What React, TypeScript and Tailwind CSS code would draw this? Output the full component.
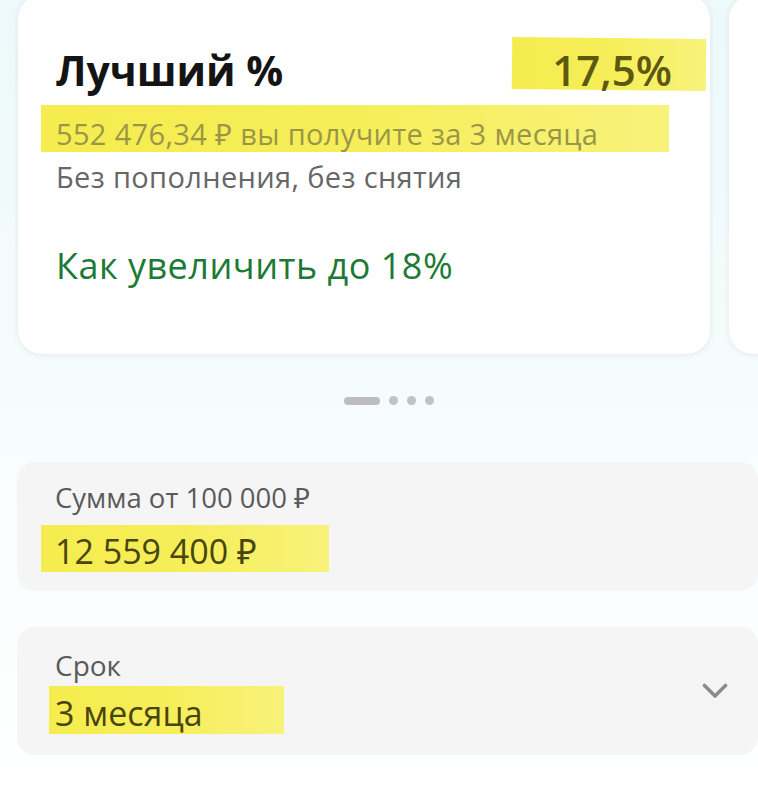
import React from "react";

const font = { fontFamily: '"Open Sans", "Noto Sans", sans-serif' };

function Highlight({ className }: { className: string }) {
  return (
    <div
      className={
        "absolute bg-gradient-to-r from-[#f5ec4f] via-[#f6ee58] to-[#f8f27a] " +
        className
      }
    />
  );
}

export default function App() {
  return (
    <div
      className="w-[758px] h-[790px] overflow-hidden bg-gradient-to-b from-[#edf9fa] via-[#f6fcfc] to-white"
      style={font}
    >
      {/* carousel */}
      <div className="flex gap-[19px] pl-[18px] -mt-[5px]">
        <div className="relative shrink-0 w-[692px] h-[359px] rounded-[24px] bg-white shadow-[0_1px_6px_rgba(0,0,0,0.08)] pl-[38px] pr-[38px] pt-[50px]">
          <Highlight className="left-[494px] top-[43px] w-[194px] h-[52px] rotate-[0.6deg]" />
          <Highlight className="left-[23px] top-[110px] w-[628px] h-[47px]" />
          <div className="relative flex items-baseline justify-between h-[50px] leading-[50px]">
            <span className="text-[41px] font-bold text-[#141414]">
              Лучший %
            </span>
            <span className="text-[42px] font-semibold text-[#5c590f]">17,5%</span>
          </div>
          <div className="relative mt-[22px] text-[29px] leading-[34px] tracking-[0.35px] text-[#9a9648]">
            552 476,34 ₽ вы получите за 3 месяца
          </div>
          <div className="relative mt-[9px] text-[29px] leading-[34px] tracking-[0.35px] text-[#676767]">
            Без пополнения, без снятия
          </div>
          <div className="relative mt-[50px] text-[36px] leading-[44px] tracking-[0.5px] font-medium text-[#1d7a34]">
            Как увеличить до 18%
          </div>
        </div>
        <div className="shrink-0 w-[692px] h-[359px] rounded-[24px] bg-white shadow-[0_1px_6px_rgba(0,0,0,0.08)]" />
      </div>

      {/* dots */}
      <div className="flex items-center justify-center gap-[9px] mt-[42px] pl-[20px]">
        <div className="w-[36px] h-[8px] rounded-full bg-[#bdbdbd]" />
        <div className="w-[9px] h-[9px] rounded-full bg-[#c2c2c2]" />
        <div className="w-[9px] h-[9px] rounded-full bg-[#c2c2c2]" />
        <div className="w-[9px] h-[9px] rounded-full bg-[#c2c2c2]" />
      </div>

      {/* sum */}
      <div className="relative ml-[17px] mt-[57px] h-[129px] rounded-[18px] bg-[#f5f5f5] pl-[38px] pt-[19px]">
        <Highlight className="left-[24px] top-[63px] w-[288px] h-[47px]" />
        <div className="relative text-[27.5px] leading-[34px] text-[#5a5a5a]">
          Сумма от 100 000 ₽
        </div>
        <div className="relative mt-[16px] text-[34px] leading-[40px] text-[#48450f]">
          12 559 400 ₽
        </div>
      </div>

      {/* term */}
      <div className="relative ml-[17px] mt-[36px] h-[128px] rounded-[18px] bg-[#f5f5f5] pl-[38px] pt-[21px] flex items-center">
        <Highlight className="left-[32px] top-[59px] w-[235px] h-[48px]" />
        <div className="flex-1 self-start">
          <div className="relative text-[28px] leading-[34px] text-[#5a5a5a]">Срок</div>
          <div className="relative mt-[11px] text-[34px] leading-[40px] text-[#48450f]">
            3 месяца
          </div>
        </div>
        <svg
          width="26"
          height="16"
          viewBox="0 0 26 16"
          className="mr-[30px] -mt-[22px]"
        >
          <polyline
            points="2.5,2.5 13,13 23.5,2.5"
            fill="none"
            stroke="#8c8c8c"
            strokeWidth="3.6"
            strokeLinecap="round"
            strokeLinejoin="round"
          />
        </svg>
      </div>
    </div>
  );
}
